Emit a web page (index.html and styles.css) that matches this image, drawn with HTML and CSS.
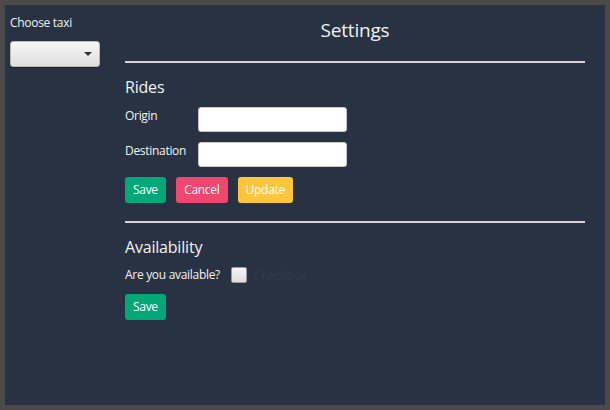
FILE: index.html
```html
<!DOCTYPE html>
<html>
<head>
<meta charset="utf-8">
<link rel="stylesheet" href="styles.css">
</head>
<body>
<div class="frame">
  <div class="window">
    <aside class="sidebar">
      <div class="side-label">Choose taxi</div>
      <div class="combo"><span class="arrow"></span></div>
    </aside>
    <main class="main">
      <h1 class="title">Settings</h1>
      <div class="rule"></div>
      <h2 class="section">Rides</h2>
      <div class="field">
        <span class="label">Origin</span>
        <span class="input"></span>
      </div>
      <div class="field">
        <span class="label">Destination</span>
        <span class="input"></span>
      </div>
      <div class="buttons">
        <span class="btn green">Save</span>
        <span class="btn pink cancel">Cancel</span>
        <span class="btn yellow update">Update</span>
      </div>
      <div class="rule rule2"></div>
      <h2 class="section">Availability</h2>
      <div class="avail">
        <span class="avail-label">Are you available?</span>
        <span class="check"></span>
        <span class="check-text">Checkbox</span>
      </div>
      <div class="buttons">
        <span class="btn green">Save</span>
      </div>
    </main>
  </div>
</div>
</body>
</html>
```

FILE: styles.css
```css
html, body {
  margin: 0;
  padding: 0;
}
body {
  width: 610px;
  height: 410px;
  overflow: hidden;
  font-family: "Open Sans", "Noto Sans", sans-serif;
  color: #f2f2f2;
}
.frame {
  width: 610px;
  height: 410px;
  box-sizing: border-box;
  padding: 5px;
  background: repeating-conic-gradient(#4f4f4f 0 25%, #454545 0 50%) 0 0 / 2px 2px;
}
.window {
  width: 100%;
  height: 100%;
  background: #283242;
  display: flex;
}
.sidebar {
  width: 120px;
  padding: 10px 0 0 5px;
  box-sizing: border-box;
}
.side-label {
  font-size: 12px;
  line-height: 16px;
  height: 16px;
  letter-spacing: -0.3px;
}
.combo {
  margin-top: 10px;
  width: 90px;
  height: 26px;
  box-sizing: border-box;
  border: 1px solid #b9b9b9;
  border-radius: 3px;
  background: linear-gradient(#f7f7f7, #dedede);
  position: relative;
  box-shadow: 0 1px 1px rgba(0,0,0,0.3);
}
.arrow {
  position: absolute;
  left: 73px;
  top: 10px;
  width: 0;
  height: 0;
  border-left: 4px solid transparent;
  border-right: 4px solid transparent;
  border-top: 4px solid #333;
}
.main {
  width: 460px;
  display: flex;
  flex-direction: column;
}
.title {
  margin: 11px 0 0 0;
  font-weight: normal;
  font-size: 19px;
  line-height: 28px;
  text-align: center;
  letter-spacing: -0.2px;
}
.rule {
  margin-top: 17px;
  height: 2px;
  background: #d4d4d4;
}
.rule2 {
  margin-top: 18px;
}
.section {
  margin: 13px 0 0 0;
  font-weight: normal;
  font-size: 16px;
  line-height: 22px;
  letter-spacing: -0.2px;
}
.field {
  display: flex;
  align-items: flex-start;
  margin-top: 9px;
}
.field + .field {
  margin-top: 10px;
}
.label {
  width: 73px;
  font-size: 12px;
  line-height: 18px;
  letter-spacing: -0.3px;
}
.input {
  width: 149px;
  height: 25px;
  box-sizing: border-box;
  background: #fff;
  border: 1px solid #c8c8c8;
  border-radius: 3px;
}
.buttons {
  display: flex;
  gap: 10px;
  margin-top: 10px;
}
.btn {
  height: 26px;
  line-height: 26px;
  padding: 0 8px;
  font-size: 12px;
  letter-spacing: -0.3px;
  border-radius: 3px;
  color: #fff;
  text-align: center;
}
.cancel { width: 52px; padding: 0; }
.update { width: 55px; padding: 0; }
.green { background: #03a879; }
.pink { background: #ef476f; }
.yellow { background: #ffc53d; }
.avail {
  display: flex;
  align-items: center;
  margin-top: 8px;
  height: 18px;
}
.avail-label {
  font-size: 12px;
  letter-spacing: -0.3px;
  line-height: 18px;
}
.check {
  margin-left: 11px;
  width: 16px;
  height: 16px;
  box-sizing: border-box;
  border: 1px solid #9c9c9c;
  border-radius: 2px;
  background: linear-gradient(#f6f6f6, #dcdcdc);
}
.check-text {
  margin-left: 7px;
  font-size: 12px;
  color: #343a45;
  letter-spacing: -0.3px;
}
```
